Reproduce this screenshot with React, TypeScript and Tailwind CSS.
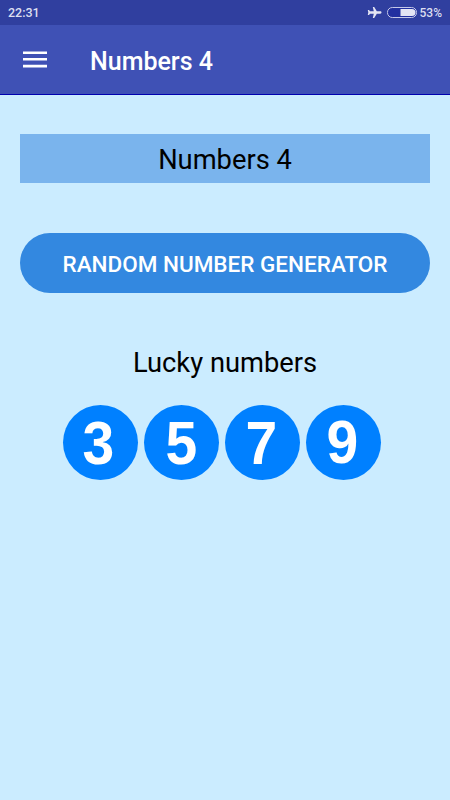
import React from "react";

const numbers = [
  { value: 3, place: "mr-[4px] mt-[1px]" },
  { value: 5, place: "mr-[1px] mt-[1px]" },
  { value: 7, place: "mr-[2px] mt-[1px]" },
  { value: 9, place: "mr-[2px] mb-[1px]" },
];

function Plane() {
  return (
    <svg className="h-[14px] w-[15px]" viewBox="0 0 15 14" fill="#e4e5f3">
      <path d="M14.500 6.500c0 .7-.5 1.200-1.200 1.200H9.800L7.200 12H5.800L6.800 7.700H3L2 9H.8L1.300 6.500.8 4H2l1 1.300h3.800L5.800 1h1.400l2.600 4.300h3.500c.7 0 1.200.5 1.200 1.200z" />
    </svg>
  );
}

function Battery() {
  return (
    <svg className="ml-[4px] h-[13px] w-[32px]" viewBox="0 0 32 13" fill="none">
      <rect x="1.500" y="1.500" width="29" height="10" rx="4.800" fill="#2230a0" stroke="#c5c8e8" />
      <path d="M14.500 3H26a3.500 3.500 0 0 1 0 7H14.500z" fill="#e4e5f3" />
    </svg>
  );
}

export default function App() {
  return (
    <div className="flex h-[800px] w-[450px] flex-col overflow-hidden bg-[#cbecff] font-['Roboto',sans-serif]">
      <div className="flex h-[25px] items-center justify-between bg-[#303f9f] px-[8px] text-[12px] font-medium text-[#dcdef0]">
        <span className="pt-[2px] text-[12.500px]">22:31</span>
        <div className="flex items-center">
          <Plane />
          <Battery />
          <span className="ml-[2px]">53%</span>
        </div>
      </div>
      <header className="flex h-[70px] items-center border-b border-[#0000b0] bg-[#3f51b5] pl-[23px]">
        <svg className="h-[19px] w-[24px]" viewBox="0 0 24 19" fill="white">
          <path d="M0 1.400h24V4H0zM0 8h24v2.600H0zM0 14.800h24v2.600H0z" />
        </svg>
        <h1 className="ml-[43px] pt-[5px] text-[25px] font-medium text-white">Numbers 4</h1>
      </header>
      <main className="flex flex-col px-[20px] pt-[39px]">
        <div className="flex h-[49px] items-center justify-center bg-[#7ab4ed] pt-[3px] text-[27.300px] text-black">Numbers 4</div>
        <button className="mt-[50px] flex h-[60px] items-center justify-center rounded-full bg-[#3388e0] pt-[3px] text-[22.500px] font-medium text-white">RANDOM NUMBER GENERATOR</button>
        <h2 className="mt-[50px] text-center text-[27.300px] leading-[40px] text-black">Lucky numbers</h2>
        <div className="mt-[21.500px] flex gap-[6.200px] pl-[42.600px]">
          {numbers.map(({ value, place }) => (
            <div key={value} className="flex size-[75px] items-center justify-center rounded-full bg-[#0080ff] font-['Liberation_Sans',sans-serif] text-[62px] leading-[75px] font-bold text-white">
              <span className={`scale-x-[.92] ${place}`}>{value}</span>
            </div>
          ))}
        </div>
      </main>
    </div>
  );
}
